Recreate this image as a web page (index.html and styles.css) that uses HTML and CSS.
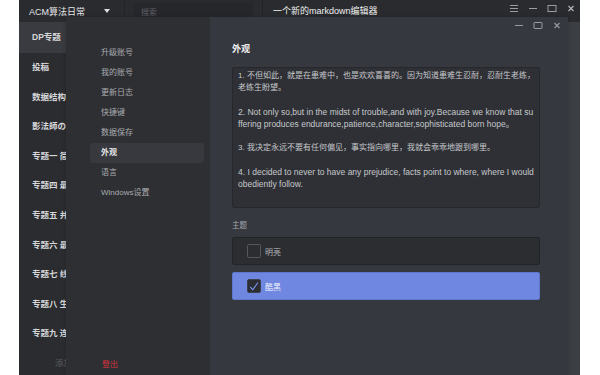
FILE: index.html
```html
<!DOCTYPE html>
<html lang="zh">
<head>
<meta charset="utf-8">
<title>markdown编辑器</title>
<link rel="stylesheet" href="styles.css">
</head>
<body>
<div class="app">
  <div class="titlebar">
    <div class="notebook">
      <span class="nb-name">ACM算法日常</span>
      <span class="caret"></span>
    </div>
    <div class="search"><span class="placeholder">搜索</span></div>
    <div class="doc-title">一个新的markdown编辑器</div>
    <div class="win-controls">
      <svg width="10" height="9" viewBox="0 0 10 9"><path d="M1 1.5h8M1 4.5h8M1 7.5h8" stroke="#9a9ca0" stroke-width="1"/></svg>
      <svg width="10" height="9" viewBox="0 0 10 9"><path d="M1 4.5h8" stroke="#9a9ca0" stroke-width="1"/></svg>
      <svg width="10" height="9" viewBox="0 0 10 9"><rect x="1" y="1.5" width="8" height="6" fill="none" stroke="#9a9ca0" stroke-width="1"/></svg>
      <svg width="10" height="9" viewBox="0 0 10 9"><path d="M2.5 2l5 5M7.5 2l-5 5" stroke="#b8babd" stroke-width="1.1"/></svg>
    </div>
  </div>
  <div class="main">
    <nav class="sidebar">
      <div class="side-item active">DP专题</div>
      <div class="side-item">投稿</div>
      <div class="side-item">数据结构专题</div>
      <div class="side-item">影法師の世界</div>
      <div class="side-item">专题一 简单</div>
      <div class="side-item">专题四 最短</div>
      <div class="side-item">专题五 并查</div>
      <div class="side-item">专题六 最小</div>
      <div class="side-item">专题七 线段</div>
      <div class="side-item">专题八 生成</div>
      <div class="side-item">专题九 连通</div>
      <div class="side-add">添加</div>
    </nav>
    <div class="content"></div>
  </div>

  <div class="dialog">
    <aside class="settings-nav">
      <ul class="nav-list">
        <li>升级账号</li>
        <li>我的账号</li>
        <li>更新日志</li>
        <li>快捷键</li>
        <li>数据保存</li>
        <li class="selected">外观</li>
        <li>语言</li>
        <li>Windows设置</li>
      </ul>
      <div class="logout">登出</div>
    </aside>
    <section class="settings-pane">
      <div class="dlg-controls">
        <svg width="10" height="9" viewBox="0 0 10 9"><path d="M1 4.5h8" stroke="#9a9ca0" stroke-width="1"/></svg>
        <svg width="10" height="9" viewBox="0 0 10 9"><rect x="1" y="1.5" width="8" height="6" rx="0.5" fill="none" stroke="#9a9ca0" stroke-width="1"/></svg>
        <svg width="10" height="9" viewBox="0 0 10 9"><path d="M2.5 2l5 5M7.5 2l-5 5" stroke="#9a9ca0" stroke-width="1.1"/></svg>
      </div>
      <h2 class="pane-title">外观</h2>
      <div class="preview">
        <p>1. 不但如此，就是在患难中，也是欢欢喜喜的。因为知道患难生忍耐，忍耐生老练，老练生盼望。</p>
        <p class="en">2. Not only so,but in the midst of trouble,and with joy.Because we know that su<wbr>ffering produces endurance,patience,character,sophisticated born hope。</p>
        <p>3. 我决定永远不要有任何偏见，事实指向哪里，我就会乖乖地跟到哪里。</p>
        <p class="en">4. I decided to never to have any prejudice, facts point to where, where I would obediently follow.</p>
      </div>
      <div class="theme-label">主题</div>
      <div class="theme-options">
        <div class="theme-option">
          <span class="check"></span>
          <span>明亮</span>
        </div>
        <div class="theme-option chosen">
          <span class="check checked">
            <svg width="13" height="13" viewBox="0 0 13 13"><path d="M2.5 6.8l2.6 3.2L10.8 2.2" fill="none" stroke="#7a93ea" stroke-width="1.2"/></svg>
          </span>
          <span>酷黑</span>
        </div>
      </div>
    </section>
  </div>
</div>
</body>
</html>
```
FILE: styles.css
```css
* { box-sizing: border-box; }
html, body { margin: 0; padding: 0; }
body {
  background: #ffffff;
  font-family: "Liberation Sans", "Noto Sans CJK SC", sans-serif;
  width: 600px;
  height: 375px;
  overflow: hidden;
}
.app {
  position: relative;
  margin-left: 19px;
  width: 561px;
  height: 375px;
  background: #2b2c30;
  display: flex;
  flex-direction: column;
  overflow: hidden;
}
.titlebar {
  height: 22px;
  flex: none;
  display: flex;
  align-items: center;
  background: #2a2b2f;
  color: #e4e5e7;
  font-size: 9px;
}
.notebook {
  width: 106px;
  height: 22px;
  display: flex;
  align-items: center;
  justify-content: space-between;
  padding: 0 14px 0 10px;
  border-right: 1px solid #232428;
}
.caret {
  width: 0; height: 0;
  border-left: 3px solid transparent;
  border-right: 3px solid transparent;
  border-top: 4px solid #e0e0e0;
}
.search {
  margin-left: 9px;
  width: 119px;
  height: 16px;
  background: #26272b;
  display: flex;
  align-items: center;
  padding-left: 7px;
}
.placeholder { color: #5d5f64; font-size: 8px; }
.doc-title {
  margin-left: 9px;
  padding-left: 10px;
  height: 22px;
  line-height: 22px;
  border-left: 1px solid #232428;
  color: #f0f0f0;
  flex: 1;
}
.win-controls {
  display: flex;
  gap: 9px;
  padding-right: 4px;
  align-self: flex-start;
  padding-top: 4px;
}
.main {
  flex: 1;
  display: flex;
}
.sidebar {
  width: 100px;
  background: #2b2c30;
  display: flex;
  flex-direction: column;
}
.side-item {
  height: 29.6px;
  line-height: 29.6px;
  padding-left: 13px;
  font-size: 8.5px;
  font-weight: bold;
  color: #d6d7d9;
  white-space: nowrap;
}
.side-item.active {
  background: #3a3b40;
  height: 31px;
  line-height: 31px;
}
.side-add {
  margin-top: auto;
  height: 22px;
  padding-left: 36px;
  font-size: 8.5px;
  color: #5d5f63;
  line-height: 20px;
}
.content { flex: 1; background: #3b3e43; }

.dialog {
  position: absolute;
  left: 47px;
  top: 17px;
  width: 502px;
  height: 358px;
  display: grid;
  grid-template-columns: 144px 1fr;
  box-shadow: 0 0 4px rgba(0,0,0,0.18);
}
.settings-nav {
  background: #2e2f33;
  display: flex;
  flex-direction: column;
  padding: 26px 6px 0 24px;
}
.nav-list {
  list-style: none;
  margin: 0;
  padding: 0;
}
.nav-list li {
  height: 20px;
  line-height: 20px;
  padding-left: 11px;
  font-size: 8px;
  color: #a9abaf;
  border-radius: 3px;
}
.nav-list li.selected {
  background: #38393e;
  color: #e2e3e5;
  font-weight: bold;
}
.logout {
  margin-top: auto;
  margin-bottom: 5px;
  padding-left: 12px;
  font-size: 8px;
  color: #d2343d;
  height: 12px;
}
.settings-pane {
  background: #363840;
  padding: 0 28px 0 22px;
  display: flex;
  flex-direction: column;
  position: relative;
}
.dlg-controls {
  position: absolute;
  top: 4px;
  right: 6px;
  display: flex;
  gap: 9px;
}
.pane-title {
  margin: 26px 0 0;
  height: 12px;
  line-height: 12px;
  font-size: 9px;
  font-weight: bold;
  color: #f2f2f3;
}
.preview {
  margin-top: 12px;
  height: 141px;
  background: #2e3035;
  border: 1px solid #27282c;
  border-radius: 2px;
  padding: 2px 1px 0 5px;
  font-size: 8px;
  line-height: 12px;
  color: #c6c8cc;
}
.preview p { margin: 0 0 12px; }
.preview p.en { font-size: 8.5px; }
.theme-label {
  margin-top: 12px;
  font-size: 7.5px;
  color: #a4a6aa;
  height: 12px;
  line-height: 12px;
}
.theme-options {
  margin-top: 5px;
  display: flex;
  flex-direction: column;
  gap: 7px;
}
.theme-option {
  height: 28px;
  border-radius: 2px;
  background: #2b2d31;
  border: 1px solid #232428;
  display: flex;
  align-items: center;
  padding-left: 14px;
  gap: 4px;
  font-size: 8px;
  color: #b4b6ba;
}
.theme-option.chosen {
  background: #6f87e0;
  border-color: #5f76cd;
  color: #eef1fc;
}
.check {
  width: 14px;
  height: 14px;
  border: 1px solid #55575c;
  border-radius: 2px;
  display: flex;
  align-items: center;
  justify-content: center;
}
.check.checked {
  background: #2b2d33;
  border-color: #3d4250;
}
```
